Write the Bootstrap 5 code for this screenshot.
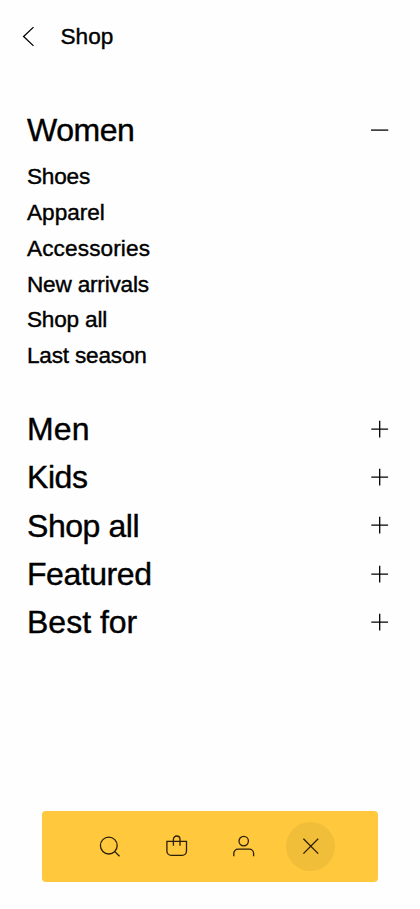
<!DOCTYPE html>
<html lang="en">
<head>
<meta charset="utf-8">
<meta name="viewport" content="width=device-width, initial-scale=1">
<title>Shop</title>
<link href="https://cdn.jsdelivr.net/npm/bootstrap@5.3.0/dist/css/bootstrap.min.css" rel="stylesheet">
<style>
body { font-family: "Liberation Sans", Arial, sans-serif; color: #000; background: #fefefe; -webkit-text-stroke: .4px #000; }
.screen { height: 909px; }
svg { display: block; fill: none; stroke: currentColor; stroke-width: 1.3; flex: none; }
.topbar { height: 73px; padding-left: 22px; gap: 25.5px; font-size: 22.6px; }
.menu { padding: 33.2px 31px 0 27px; }
.menu-row { height: 48.4px; font-size: 32px; line-height: 48.4px; }
.sub { padding: 4.3px 0 30.7px; font-size: 22.6px; line-height: 35.87px; }
.snug { letter-spacing: -.2px; }
.tight { letter-spacing: -.45px; }
.airy { letter-spacing: .12px; }
.menu-row svg { margin-top: -.6px; }
.dock { width: 336px; height: 71.5px; margin-bottom: 27px; background: #ffc83d; border-radius: 4px; padding: 0 34px; color: #2b2008; }
.dock-btn { width: 67px; height: 71px; color: inherit; }
.halo { width: 49px; height: 49px; background: #f0be38; }
</style>
</head>
<body>
<main class="screen d-flex flex-column overflow-hidden">
  <header class="topbar d-flex align-items-center">
    <a href="#" class="text-reset" aria-label="Back"><svg width="13" height="22" viewBox="0 0 13 22"><path d="M11.5 1.1 1.6 10.5l9.9 9.4"/></svg></a>
    <span>Shop</span>
  </header>
  <nav class="menu">
    <div class="menu-row d-flex justify-content-between align-items-center"><span class="tight">Women</span><svg width="18" height="18"><path d="M0 9.1h17.3"/></svg></div>
    <ul class="sub list-unstyled mb-0">
      <li class="snug">Shoes</li>
      <li>Apparel</li>
      <li class="airy">Accessories</li>
      <li class="snug">New arrivals</li>
      <li class="snug">Shop all</li>
      <li class="snug">Last season</li>
    </ul>
    <div class="menu-row d-flex justify-content-between align-items-center"><span class="airy">Men</span><svg width="18" height="18"><path d="M.3 9.2h16.8M8.7.8v16.8"/></svg></div>
    <div class="menu-row d-flex justify-content-between align-items-center"><span class="tight">Kids</span><svg width="18" height="18"><path d="M.3 9.2h16.8M8.7.8v16.8"/></svg></div>
    <div class="menu-row d-flex justify-content-between align-items-center"><span class="tight">Shop all</span><svg width="18" height="18"><path d="M.3 9.2h16.8M8.7.8v16.8"/></svg></div>
    <div class="menu-row d-flex justify-content-between align-items-center"><span class="tight">Featured</span><svg width="18" height="18"><path d="M.3 9.2h16.8M8.7.8v16.8"/></svg></div>
    <div class="menu-row d-flex justify-content-between align-items-center"><span>Best for</span><svg width="18" height="18"><path d="M.3 9.2h16.8M8.7.8v16.8"/></svg></div>
  </nav>
  <div class="dock d-flex align-items-center mt-auto mx-auto">
    <a href="#" class="dock-btn d-flex align-items-center justify-content-center" aria-label="Search"><svg width="24" height="24"><circle cx="10.8" cy="11.6" r="8.4"/><path d="m16.8 17.6 4.7 4.6"/></svg></a>
    <a href="#" class="dock-btn d-flex align-items-center justify-content-center" aria-label="Bag"><svg width="24" height="24"><path d="M1.9 7.3h19.6v9.8a4.3 4.3 0 0 1-4.3 4.3h-11a4.3 4.3 0 0 1-4.3-4.3zM8.4 11.7V5.3a3.3 3.3 0 0 1 6.6 0v6.4"/></svg></a>
    <a href="#" class="dock-btn d-flex align-items-center justify-content-center" aria-label="Account"><svg width="24" height="24"><circle cx="11.7" cy="7.1" r="4.7"/><path d="M1.8 22.3v-2.9a4.3 4.3 0 0 1 4.3-4.3h11.2a4.3 4.3 0 0 1 4.3 4.3v2.9"/></svg></a>
    <a href="#" class="dock-btn d-flex align-items-center justify-content-center" aria-label="Close"><span class="halo rounded-circle d-flex align-items-center justify-content-center"><svg width="24" height="24"><path d="m4.4 4.8 14.8 14.8M19.2 4.8 4.4 19.6"/></svg></span></a>
  </div>
</main>
<script src="https://cdn.jsdelivr.net/npm/bootstrap@5.3.0/dist/js/bootstrap.bundle.min.js"></script>
</body>
</html>
